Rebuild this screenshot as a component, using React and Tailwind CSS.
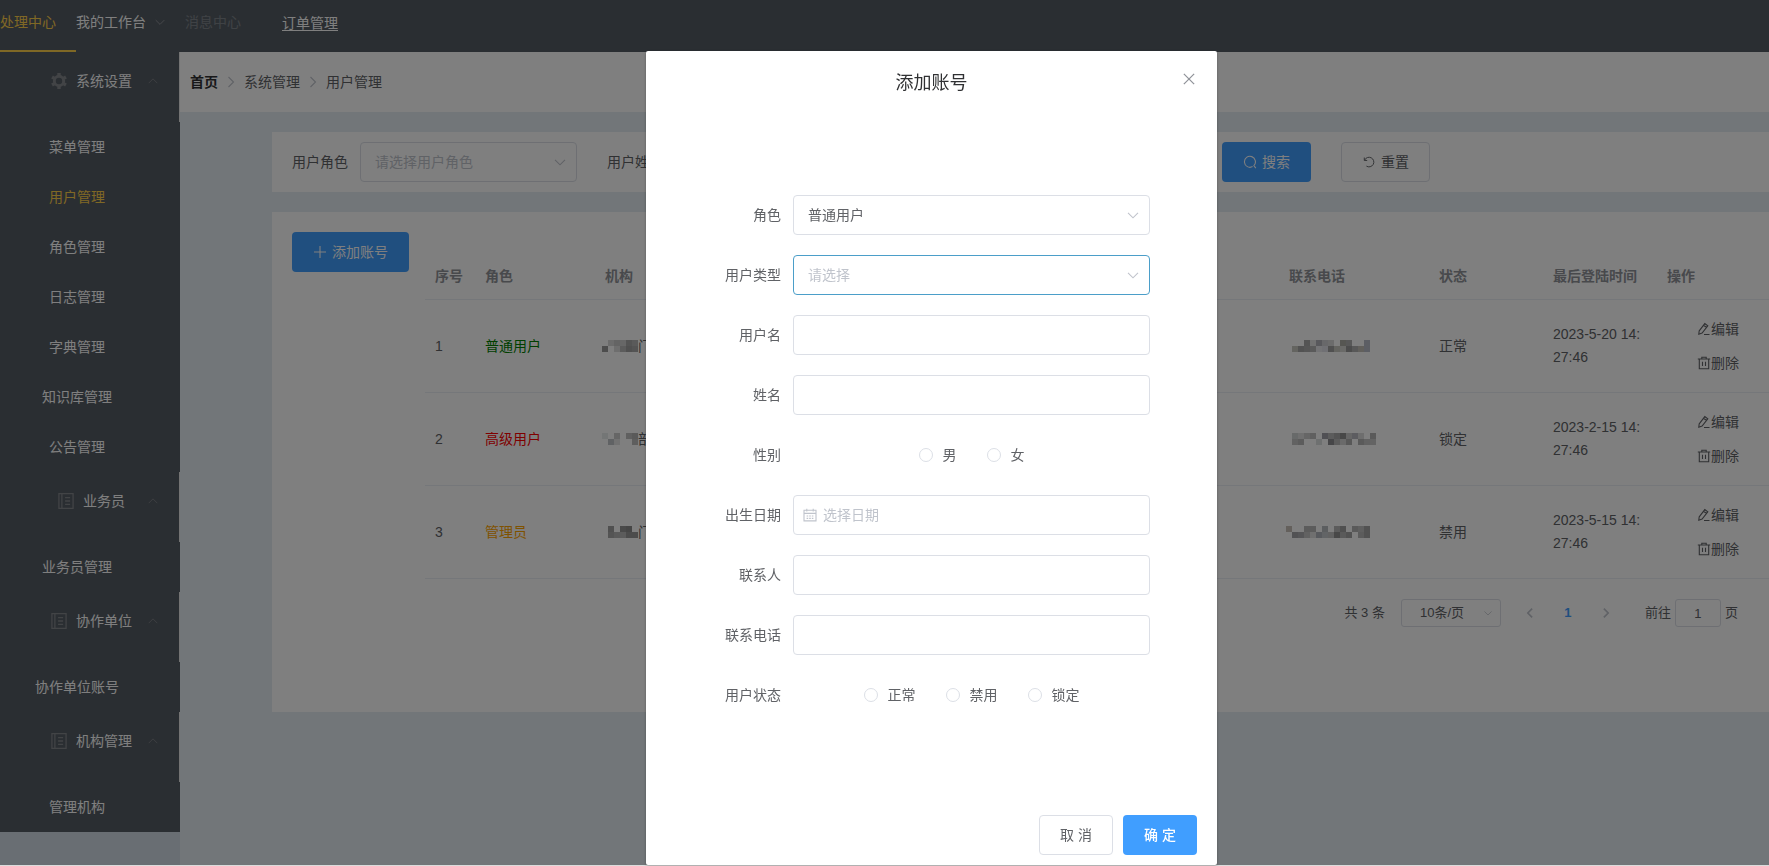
import { clsx } from 'clsx'

const menu = [
  { title: '系统设置', icon: 'gear', items: ['菜单管理', '用户管理', '角色管理', '日志管理', '字典管理', '知识库管理', '公告管理'] },
  { title: '业务员', icon: 'book', items: ['业务员管理'] },
  { title: '协作单位', icon: 'book', items: ['协作单位账号'] },
  { title: '机构管理', icon: 'book', items: ['管理机构'] },
]

// Each mosaic block is [column, row, shade] on a 6px grid
const rows = [
  {
    id: 1,
    role: '普通用户',
    roleClass: 'text-[#008000]',
    org: '门',
    orgBlocks: [[0, 1, '#9a9a9a'], [1, 0, '#d8d8d8'], [2, 0, '#c8c8c8'], [3, 0, '#cfcfcf'], [4, 0, '#a8a8a8'], [5, 0, '#b4b4b4'], [2, 1, '#dcdcdc'], [3, 1, '#b8b8b8'], [4, 1, '#a0a0a0'], [5, 1, '#a8a8a8']],
    phoneBlocks: [[1, 1, '#c8c8c0'], [2, 1, '#a4a4a4'], [3, 0, '#a8a8a8'], [3, 1, '#acacac'], [4, 0, '#e4e4e4'], [4, 1, '#b4b4b4'], [5, 0, '#b0b0b8'], [5, 1, '#e8e8ec'], [6, 0, '#d0d0d4'], [6, 1, '#e0e0e8'], [7, 0, '#d8d8d8'], [7, 1, '#a0a0a0'], [8, 1, '#c8c8c0'], [9, 0, '#acaca4'], [9, 1, '#d4d4d0'], [10, 0, '#b0b0b0'], [10, 1, '#989898'], [11, 1, '#b0b0b0'], [12, 1, '#c4c0b8'], [13, 0, '#b8bcc8'], [13, 1, '#b8bcc8']],
    state: '正常',
    date: '2023-5-20 14:27:46',
  },
  {
    id: 2,
    role: '高级用户',
    roleClass: 'text-[#ff0000]',
    org: '部',
    orgBlocks: [[0, 0, '#e8ecec'], [1, 1, '#c0c4c8'], [2, 0, '#cccccc'], [2, 1, '#e4e4e4'], [4, 0, '#c0c0c0'], [5, 0, '#b4b4b4'], [5, 1, '#bcbcbc']],
    phoneBlocks: [[1, 0, '#d0d4d4'], [1, 1, '#c4c4c4'], [2, 0, '#e0e0e0'], [2, 1, '#b8b8b8'], [3, 0, '#cccccc'], [4, 0, '#c0c0c0'], [5, 1, '#dce0e0'], [6, 0, '#a0a0a8'], [7, 0, '#b8b8b8'], [7, 1, '#8c8c90'], [8, 0, '#a8a8a8'], [8, 1, '#b8b8b8'], [9, 0, '#909090'], [9, 1, '#d4d4d4'], [10, 0, '#cccccc'], [10, 1, '#b0b0b0'], [11, 0, '#b8b8c0'], [12, 0, '#dcdcdc'], [12, 1, '#b4b4b4'], [13, 1, '#c4c4c4'], [14, 0, '#b4b4b4'], [14, 1, '#c8c8c8']],
    state: '锁定',
    date: '2023-2-15 14:27:46',
  },
  {
    id: 3,
    role: '管理员',
    roleClass: 'text-[#ffa500]',
    org: '门',
    orgBlocks: [[1, 0, '#a0a0a0'], [1, 1, '#a8a8a8'], [2, 1, '#b4b4b4'], [3, 0, '#949494'], [3, 1, '#b8b8b8'], [4, 0, '#8c8c8c'], [4, 1, '#989898'], [5, 1, '#989898']],
    phoneBlocks: [[0, 0, '#c8c0b8'], [1, 1, '#a4a4a8'], [2, 1, '#acacb0'], [3, 0, '#b8b8b8'], [3, 1, '#c4c4c4'], [4, 0, '#b8b8b8'], [4, 1, '#e0e0e0'], [5, 1, '#b0b4bc'], [6, 0, '#b8bcc0'], [6, 1, '#c4c8cc'], [7, 1, '#c4c4c4'], [8, 0, '#b8b8b8'], [8, 1, '#909090'], [9, 0, '#a0a0a0'], [9, 1, '#b4b4b4'], [10, 1, '#a4a4a4'], [11, 0, '#b4b4b4'], [12, 0, '#c0c0c0'], [12, 1, '#b8b8b8'], [13, 0, '#a4a4a4'], [13, 1, '#a4a4a4']],
    state: '禁用',
    date: '2023-5-15 14:27:46',
  },
]

const icons = {
  down: <path d="M2 4.8 7 9.8l5-5" />,
  up: <path d="M2 9.5 7 4.5l5 5" />,
  right: <path d="m4.5 2 5 5-5 5" />,
  left: <path d="m9.5 2-5 5 5 5" />,
  plus: <path d="M7 1v12M1 7h12" />,
  close: <path d="m2.5 2.5 9 9M11.5 2.5l-9 9" />,
  search: <path d="M9.6 11.6a5.5 5.5 0 1 1 1.3-1l1.9 2.5" />,
  reset: <path d="M1.5 1.8v3.4h3.4M1.9 4.8A5.6 5.6 0 1 1 4 11.8" />,
  edit: <path d="m2.2 8.8 5.6-7.2 3 2.3-5.7 7.2-3.3 1.1zM6.6 3.2l3 2.3M7 12.5h5.5" />,
  trash: <path d="M.8 3h12.4M4.8 3V1.2h4.4V3M2.3 3v9.7h9.4V3M5.5 5.8V10M8.5 5.8V10" />,
  date: <path d="M1 2.3h12v10.6H1zM1 5.4h12M3.8.8v2.6M10.2.8v2.6M3.6 8h1.6M6.2 8h1.6M8.8 8h1.6M3.6 10.4h1.6M6.2 10.4h1.6M8.8 10.4h1.6" />,
  book: <path d="M.8.5h12.4v13H.8zM3.4.5v13M6.2 4h4.4M6.2 7h4.4M6.2 10h4.4" />,
  gear: (
    <>
      <circle cx="7" cy="7" r="4.1" strokeWidth="2.6" />
      <path strokeWidth="3" d="M7 0v2.4M7 11.6V14M.9 3.5 3 4.7M11 9.3l2.1 1.2M.9 10.5 3 9.3M11 4.7l2.1-1.2" />
    </>
  ),
}

function Icon({ name, className }) {
  return (
    <svg viewBox="0 0 14 14" fill="none" stroke="currentColor" strokeWidth="1.1" className={clsx('shrink-0', className)} aria-hidden="true">
      {icons[name]}
    </svg>
  )
}

function Mosaic({ blocks }) {
  return (
    <svg viewBox="0 0 90 12" className="h-3 w-[90px] shrink-0" shapeRendering="crispEdges" aria-hidden="true">
      {blocks.map(([x, y, fill]) => (
        <rect key={`${x}-${y}`} x={x * 6} y={y * 6} width="6" height="6" fill={fill} />
      ))}
    </svg>
  )
}

function SelectBox({ id, options, placeholder, className }) {
  return (
    <div className="grid min-w-0 flex-1 items-center">
      <select
        id={id}
        className={clsx('col-start-1 row-start-1 h-10 w-full appearance-none rounded border bg-white px-[14px] outline-none', className)}
      >
        {placeholder ? <option>{placeholder}</option> : null}
        {options.map((option) => <option key={option}>{option}</option>)}
      </select>
      <Icon name="down" className="pointer-events-none col-start-1 row-start-1 mr-[10px] size-[14px] justify-self-end text-[#c0c4cc]" />
    </div>
  )
}

function TopBar() {
  return (
    <nav className="flex h-[52px] bg-[#545c64] text-white">
      <a href="#center" className="w-[76px] border-b-2 border-[#ffd04b] leading-[44px] text-[#ffd04b]">处理中心</a>
      <a href="#workbench" className="flex h-11 w-[109px] items-center gap-2">
        我的工作台
        <Icon name="down" className="size-3 text-[#909399]" />
      </a>
      <a href="#messages" className="w-[97px] leading-[44px] opacity-25">消息中心</a>
      <a href="#orders" className="leading-[46px] underline underline-offset-2">订单管理</a>
    </nav>
  )
}

function Sidebar() {
  return (
    <aside className="w-[180px] shrink-0 bg-[#d3dce6] text-white">
      {menu.map((group) => (
        <div key={group.title} className="bg-[#545c64]">
          <div className="grid h-[70px] grid-cols-[1fr_auto_1fr] items-center border-r border-[#e6e6e6] pb-3">
            <div className="col-start-2 flex items-center">
              <span className="flex w-[29px] justify-start pl-1">
                <Icon name={group.icon} className="size-4 text-[#85888d]" />
              </span>
              {group.title}
            </div>
            <Icon name="up" className="mr-5 size-3 justify-self-end text-[#7c8086]" />
          </div>
          {group.items.map((item) => (
            <a
              key={item}
              href={`#${item}`}
              className={clsx('flex h-[50px] items-center justify-center pr-[26px]', item === '用户管理' && 'text-[#ffd04b]')}
            >
              {item}
            </a>
          ))}
        </div>
      ))}
    </aside>
  )
}

function Breadcrumb() {
  return (
    <div className="flex h-[60px] items-center bg-white px-[10px]">
      <a href="#home" className="font-bold text-[#303133]">首页</a>
      <Icon name="right" className="mx-[6px] size-[14px] text-[#c0c4cc]" />
      <span>系统管理</span>
      <Icon name="right" className="mx-[6px] size-[14px] text-[#c0c4cc]" />
      <span>用户管理</span>
    </div>
  )
}

function SearchCard() {
  return (
    <form className="flex h-[60px] items-center gap-[30px] bg-white px-5">
      <div className="flex w-[285px] items-center gap-3">
        <label htmlFor="filter-role">用户角色</label>
        <SelectBox id="filter-role" placeholder="请选择用户角色" options={[]} className="border-[#dcdfe6] text-[#c0c4cc]" />
      </div>
      <div className="flex w-[585px] items-center gap-3">
        <label htmlFor="filter-name">用户姓名</label>
        <input id="filter-name" className="h-10 min-w-0 flex-1 rounded border border-[#dcdfe6] px-[15px]" />
      </div>
      <button type="button" className="flex h-10 items-center gap-[5px] rounded bg-[#409eff] px-[21px] text-white">
        <Icon name="search" className="size-[14px]" />
        搜索
      </button>
      <button type="button" className="flex h-10 items-center gap-[6px] rounded border border-[#dcdfe6] pr-5 pl-[21px]">
        <Icon name="reset" className="size-3" />
        重置
      </button>
    </form>
  )
}

function UserTable() {
  return (
    <table className="mt-5 w-full table-fixed border-separate border-spacing-0 text-left [&_td]:border-b [&_td]:border-[#ebeef5] [&_th]:border-b [&_th]:border-[#ebeef5]">
      <colgroup>
        <col className="w-[50px]" />
        <col className="w-[120px]" />
        <col />
        <col className="w-[150px]" />
        <col className="w-[114px]" />
        <col className="w-[114px]" />
        <col className="w-[112px]" />
      </colgroup>
      <thead className="text-[#909399]">
        <tr className="h-12">
          {['序号', '角色', '机构', '联系电话', '状态', '最后登陆时间', '操作'].map((name) => (
            <th key={name} className="px-[10px] font-bold whitespace-nowrap">{name}</th>
          ))}
        </tr>
      </thead>
      <tbody>
        {rows.map((row) => (
          <tr key={row.id} className="h-[93px]">
            <td className="px-[10px]">{row.id}</td>
            <td className={clsx('px-[10px]', row.roleClass)}>{row.role}</td>
            <td className="pl-[7px]">
              <div className="flex items-center">
                <div className="w-9 overflow-hidden"><Mosaic blocks={row.orgBlocks} /></div>
                {row.org}
              </div>
            </td>
            <td className="pl-[7px]"><Mosaic blocks={row.phoneBlocks} /></td>
            <td className="px-[10px]">{row.state}</td>
            <td className="px-[10px] leading-[23px] break-all">{row.date}</td>
            <td className="pl-10">
              <div className="flex flex-col gap-[14px]">
                <button type="button" className="flex items-center"><Icon name="edit" className="size-[14px]" />编辑</button>
                <button type="button" className="flex items-center"><Icon name="trash" className="size-[14px]" />删除</button>
              </div>
            </td>
          </tr>
        ))}
      </tbody>
    </table>
  )
}

function Pagination() {
  return (
    <div className="mt-5 flex h-7 items-center justify-end pr-[31px] text-[13px]">
      <span className="mr-4">共 3 条</span>
      <div className="mr-[10px] grid w-[100px] items-center">
        <select aria-label="每页条数" className="col-start-1 row-start-1 h-7 w-full appearance-none rounded-[3px] border border-[#dcdfe6] pl-[18px]">
          <option>10条/页</option>
        </select>
        <Icon name="down" className="pointer-events-none col-start-1 row-start-1 mr-2 size-[10px] justify-self-end text-[#c0c4cc]" />
      </div>
      <button type="button" aria-label="上一页" className="flex w-[38px] justify-center text-[#c0c4cc]"><Icon name="left" className="size-3 stroke-2" /></button>
      <button type="button" className="w-[38px] font-bold text-[#409eff]">1</button>
      <button type="button" aria-label="下一页" className="flex w-[38px] justify-center text-[#c0c4cc]"><Icon name="right" className="size-3 stroke-2" /></button>
      <label htmlFor="page-jump" className="mr-1 ml-5">前往</label>
      <input id="page-jump" defaultValue="1" className="mr-1 h-7 w-[46px] rounded-[3px] border border-[#dcdfe6] text-center" />
      <span>页</span>
    </div>
  )
}

function FormRow({ label, htmlFor, children }) {
  return (
    <div className="flex h-10 items-center">
      <label htmlFor={htmlFor} className="w-20 shrink-0 pr-3 text-right">{label}</label>
      {children}
    </div>
  )
}

function TextField({ id, label }) {
  return (
    <FormRow label={label} htmlFor={id}>
      <input id={id} className="h-10 min-w-0 flex-1 rounded border border-[#dcdfe6] px-[15px]" />
    </FormRow>
  )
}

function RadioRow({ name, label, options }) {
  return (
    <div role="radiogroup" aria-labelledby={`${name}-label`} className="flex h-10 items-center">
      <span id={`${name}-label`} className="w-20 shrink-0 pr-3 text-right">{label}</span>
      <div className="flex flex-1 justify-center gap-[30px]">
        {options.map((option) => (
          <label key={option} className="flex items-center gap-[10px]">
            <input type="radio" name={name} className="size-[14px] appearance-none rounded-full border border-[#dcdfe6] bg-white checked:border-4 checked:border-[#409eff]" />
            {option}
          </label>
        ))}
      </div>
    </div>
  )
}

function AddAccountDialog() {
  return (
    <div className="fixed inset-x-0 top-0 bottom-px grid grid-cols-[646fr_571fr_552fr] items-start bg-black/50">
      <section role="dialog" aria-labelledby="dialog-title" className="col-start-2 mt-[51px] rounded-xs bg-white shadow-[0_1px_3px_rgba(0,0,0,0.3)]">
        <header className="grid grid-cols-[1fr_auto_1fr] px-5 pt-5 pb-[10px]">
          <h2 id="dialog-title" className="col-start-2 text-lg leading-6 text-[#303133]">添加账号</h2>
          <button type="button" aria-label="关闭" className="size-4 justify-self-end text-[#909399]">
            <Icon name="close" className="size-4" />
          </button>
        </header>
        <form className="flex flex-col gap-5 px-[67px] pt-[90px] pb-[100px]">
          <FormRow label="角色" htmlFor="role">
            <SelectBox id="role" options={['普通用户', '高级用户', '管理员']} className="border-[#dcdfe6]" />
          </FormRow>
          <FormRow label="用户类型" htmlFor="user-type">
            <SelectBox id="user-type" placeholder="请选择" options={[]} className="border-[#4b9ec9] text-[#c0c4cc]" />
          </FormRow>
          <TextField id="username" label="用户名" />
          <TextField id="fullname" label="姓名" />
          <RadioRow name="gender" label="性别" options={['男', '女']} />
          <FormRow label="出生日期" htmlFor="birthday">
            <div className="flex h-10 min-w-0 flex-1 items-center gap-[6px] rounded border border-[#dcdfe6] pl-[9px]">
              <Icon name="date" className="size-[14px] text-[#c0c4cc]" />
              <input id="birthday" placeholder="选择日期" className="min-w-0 flex-1 outline-none placeholder:text-[#c0c4cc]" />
            </div>
          </FormRow>
          <TextField id="contact" label="联系人" />
          <TextField id="phone" label="联系电话" />
          <RadioRow name="status" label="用户状态" options={['正常', '禁用', '锁定']} />
        </form>
        <footer className="flex justify-end gap-[10px] px-5 pb-[10px]">
          <button type="button" className="h-10 w-[74px] rounded border border-[#dcdfe6]">取 消</button>
          <button type="button" className="h-10 w-[74px] rounded bg-[#409eff] font-medium text-white">确 定</button>
        </footer>
      </section>
    </div>
  )
}

export default function App() {
  return (
    <div className="flex min-h-screen flex-col border-b border-[#dcdcdc] font-['Liberation_Sans','Noto_Sans_CJK_SC',sans-serif] text-sm text-[#606266]">
      <TopBar />
      <div className="flex flex-1">
        <Sidebar />
        <main className="min-w-0 flex-1 bg-[#e4ecf2]">
          <Breadcrumb />
          <div className="flex flex-col gap-5 py-5 pl-[92px]">
            <SearchCard />
            <section className="flex min-h-[500px] items-start gap-4 bg-white pt-5 pl-5">
              <button type="button" className="flex h-10 shrink-0 items-center gap-[5px] rounded bg-[#409eff] px-[21px] text-white">
                <Icon name="plus" className="size-[14px]" />
                添加账号
              </button>
              <div className="min-w-0 flex-1">
                <UserTable />
                <Pagination />
              </div>
            </section>
          </div>
        </main>
      </div>
      <AddAccountDialog />
    </div>
  )
}
